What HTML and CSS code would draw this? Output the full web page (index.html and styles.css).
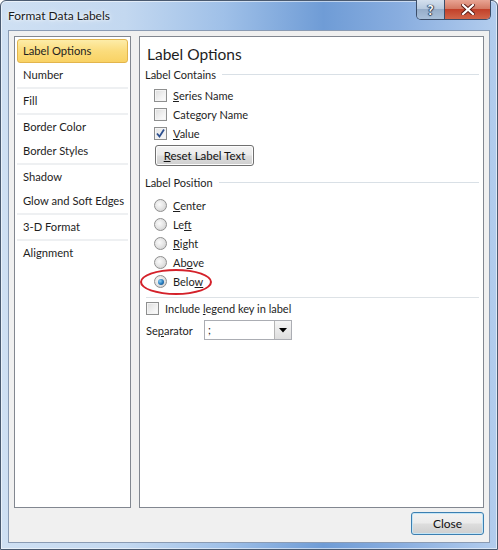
FILE: index.html
```html
<!DOCTYPE html>
<html>
<head>
<meta charset="utf-8">
<link rel="stylesheet" href="styles.css">
</head>
<body>
<div class="window">
  <div class="titlebar">
    <span class="title">Format Data Labels</span>
    <div class="caption-btns">
      <div class="cbtn help">?</div>
      <div class="cbtn close">
        <svg width="14" height="11" viewBox="0 0 14 11"><path d="M2 1 L12 10 M12 1 L2 10" stroke="#5a1a14" stroke-width="4" stroke-linecap="square"/><path d="M2 1 L12 10 M12 1 L2 10" stroke="#fff" stroke-width="2.2" stroke-linecap="square"/></svg>
      </div>
    </div>
  </div>
  <div class="client">
    <div class="main">
      <ul class="nav">
        <li class="item selected">Label Options</li>
        <li class="item sep">Number</li>
        <li class="item sep">Fill</li>
        <li class="item">Border Color</li>
        <li class="item sep">Border Styles</li>
        <li class="item">Shadow</li>
        <li class="item sep">Glow and Soft Edges</li>
        <li class="item sep">3-D Format</li>
        <li class="item">Alignment</li>
      </ul>
      <div class="panel">
        <div class="heading">Label Options</div>
        <div class="group-title"><span>Label Contains</span><div class="gline"></div></div>
        <div class="opt-row"><span class="check"></span><span><u>S</u>eries Name</span></div>
        <div class="opt-row"><span class="check"></span><span>Cate<u>g</u>ory Name</span></div>
        <div class="opt-row"><span class="check checked"><svg width="11" height="11" viewBox="0 0 11 11"><path d="M2 5.5 L4.5 8.5 L9 1.5" fill="none" stroke="#2c4f8f" stroke-width="1.8"/></svg></span><span><u>V</u>alue</span></div>
        <div class="btn-row"><button class="btn reset"><u>R</u>eset Label Text</button></div>
        <div class="group-title pos"><span>Label Position</span><div class="gline"></div></div>
        <div class="radios">
          <div class="opt-row"><span class="radio"></span><span><u>C</u>enter</span></div>
          <div class="opt-row"><span class="radio"></span><span>Le<u>f</u>t</span></div>
          <div class="opt-row"><span class="radio"></span><span><u>R</u>ight</span></div>
          <div class="opt-row"><span class="radio"></span><span>Ab<u>o</u>ve</span></div>
          <div class="opt-row marked"><span class="radio on"></span><span>Belo<u>w</u></span><span class="ellipse"></span></div>
        </div>
        <div class="hline"></div>
        <div class="legend-row"><span class="check"></span><span>Include <u>l</u>egend key in label</span></div>
        <div class="sep-row">
          <span class="sep-label">Se<u>p</u>arator</span>
          <div class="combo"><span class="combo-val">;</span><span class="combo-btn"><svg width="8" height="5" viewBox="0 0 8 5"><path d="M0 0 H8 L4 4.5 Z" fill="#000"/></svg></span></div>
        </div>
      </div>
    </div>
    <div class="footer">
      <button class="btn closebtn">Close</button>
    </div>
  </div>
</div>
</body>
</html>
```
FILE: styles.css
```css
* { box-sizing: border-box; }
html, body { margin: 0; padding: 0; }
body {
  width: 498px;
  height: 550px;
  overflow: hidden;
  background: #fff;
  font-family: Lato, "Liberation Sans", sans-serif;
  font-size: 11px;
  color: #1e1e1e;
}
.window {
  width: 498px;
  height: 550px;
  border: 1px solid #4a5a70;
  border-radius: 6px 6px 0 0;
  background:
    linear-gradient(90deg, #cfe0f3 0%, #c3d8f0 25%, #9fc0e8 45%, #6f9cd6 65%, #88addf 80%, #b3cdee 100%);
  display: flex;
  flex-direction: column;
  box-shadow: inset 0 0 0 1px rgba(255,255,255,0.55);
}
.titlebar {
  height: 29px;
  display: flex;
  align-items: flex-start;
  padding-left: 7px;
}
.title {
  margin-top: 7px;
  font-size: 12px;
  color: #1a1a1a;
  text-shadow: 0 0 6px rgba(255,255,255,0.9), 0 0 3px rgba(255,255,255,0.9);
}
.caption-btns {
  margin-left: auto;
  margin-right: 6px;
  margin-top: -1px;
  display: flex;
  height: 20px;
  border: 1px solid #3b4d68;
  border-top: none;
  border-radius: 0 0 5px 5px;
  overflow: hidden;
}
.cbtn {
  height: 19px;
  display: flex;
  align-items: center;
  justify-content: center;
}
.help {
  width: 28px;
  background: linear-gradient(#d4e0ee 0%, #b8cadf 45%, #96adc9 50%, #a9c0da 100%);
  border-right: 1px solid #3b4d68;
  color: #fff;
  font-weight: bold;
  font-size: 13px;
  text-shadow: 0 0 1px #2c3e58, 1px 0 1px #2c3e58, -1px 0 1px #2c3e58, 0 1px 1px #2c3e58;
}
.close {
  width: 45px;
  background: linear-gradient(#e8a493 0%, #d47a64 45%, #c2412a 50%, #d0654a 100%);
}
.client {
  flex: 1;
  margin: 0 7px 6px 7px;
  border: 1px solid #8a9bb3;
  background: #f0f0f0;
  padding: 5px 5px 7px 5px;
  display: flex;
  flex-direction: column;
}
.main {
  flex: 1;
  display: flex;
  gap: 8px;
}
.nav {
  width: 117px;
  margin: 0;
  padding: 2px 0 0 0;
  list-style: none;
  background: #fff;
  border: 1px solid #828790;
  font-size: 11.2px;
}
.item {
  height: 24px;
  line-height: 24px;
  margin: 0 2px;
  padding-left: 6px;
  white-space: nowrap;
}
.item.sep {
  height: 26px;
  border-bottom: 2px solid #eef0f2;
}
.item.selected {
  background: linear-gradient(#fdeca8 0%, #fbdc7c 50%, #f9d264 100%);
  border: 1px solid #e3b54c;
  border-radius: 3px;
  line-height: 22px;
  padding-left: 5px;
}
.panel {
  flex: 1;
  background: #fff;
  border: 1px solid #828790;
  padding: 6px 4px 0 5px;
  display: flex;
  flex-direction: column;
}
.heading {
  font-size: 15.5px;
  height: 23px;
  line-height: 23px;
  margin-left: 2px;
}
.group-title {
  display: flex;
  align-items: center;
  height: 16px;
  gap: 6px;
}
.group-title.pos { margin-top: 8px; }
.gline {
  flex: 1;
  height: 1px;
  background: #d9e0e6;
}
.opt-row {
  height: 19px;
  display: flex;
  align-items: center;
  padding-left: 9px;
  gap: 6px;
  position: relative;
}
.check {
  width: 13px;
  height: 13px;
  border: 1px solid #8e8f8f;
  background: linear-gradient(135deg, #dcdcdc 0%, #f2f2f2 60%, #fdfdfd 100%);
  box-shadow: inset 0 0 0 1px #f4f4f4;
  display: flex;
  align-items: center;
  justify-content: center;
  flex: none;
}
.check.checked { background: linear-gradient(135deg, #e4e4e4, #fafafa); }
.group-title + .opt-row { margin-top: 4px; }
.btn-row {
  padding-left: 10px;
  margin-top: 2px;
}
.btn {
  font-family: inherit;
  font-size: 11.5px;
  color: #111;
  background: linear-gradient(#f3f3f3 0%, #ebebeb 48%, #dddddd 52%, #cfcfcf 100%);
  border: 1px solid #707070;
  border-radius: 3px;
  box-shadow: inset 0 0 0 1px #fcfcfc;
  padding: 0;
}
.reset {
  width: 99px;
  height: 21px;
}
.radios { margin-top: 6px; }
.radio {
  width: 13px;
  height: 13px;
  border-radius: 50%;
  border: 1px solid #8f8f8f;
  background: radial-gradient(circle at 40% 40%, #fafafa 0%, #e6e6e6 45%, #c9c9c9 100%);
  flex: none;
  display: flex;
  align-items: center;
  justify-content: center;
}
.radio.on::after {
  content: "";
  width: 6px;
  height: 6px;
  border-radius: 50%;
  background: radial-gradient(circle at 35% 35%, #8fd0f5 0%, #2a7fc0 50%, #163f6e 100%);
}
.ellipse {
  position: absolute;
  left: -5px;
  top: -3px;
  width: 72px;
  height: 26px;
  border: 2px solid #d4212a;
  border-radius: 50%;
  pointer-events: none;
}
.hline {
  height: 1px;
  background: #dde2e6;
  margin: 6px 0 0 1px;
}
.legend-row {
  height: 21px;
  display: flex;
  align-items: center;
  gap: 6px;
  padding-left: 1px;
}
.sep-row {
  height: 22px;
  display: flex;
  align-items: center;
  padding-left: 1px;
}
.sep-label { width: 58px; }
.combo {
  width: 88px;
  height: 20px;
  border: 1px solid #abadb3;
  background: #fff;
  display: flex;
  align-items: stretch;
}
.combo-val {
  flex: 1;
  padding-left: 3px;
  line-height: 18px;
}
.combo-btn {
  width: 17px;
  border-left: 1px solid #b5b5b5;
  background: linear-gradient(#f5f5f5, #dedede);
  display: flex;
  align-items: center;
  justify-content: center;
}
.footer {
  display: flex;
  justify-content: flex-end;
  padding-top: 4px;
}
.closebtn {
  width: 73px;
  height: 23px;
  border-color: #3c7fb1;
  box-shadow: inset 0 0 0 1px #c4e5f6;
  font-size: 12px;
}
```
